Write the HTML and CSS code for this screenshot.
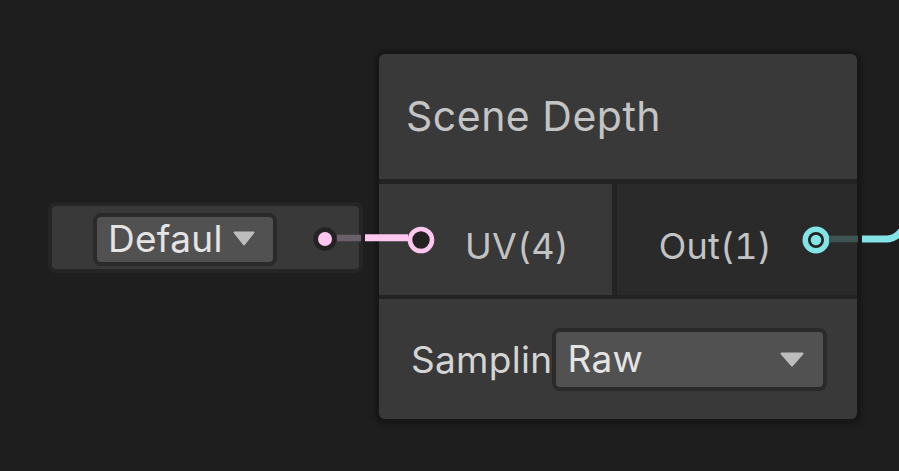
FILE: index.html
```html
<!DOCTYPE html>
<html lang="en">
<head>
<meta charset="utf-8">
<title>Scene Depth</title>
<link rel="stylesheet" href="styles.css">
</head>
<body>
<div class="canvas">
  <div class="field">
    <div class="dropdown dropdown--small">
      <span class="dropdown-text">Defaul</span>
      <svg class="arrow arrow--small" viewBox="0 0 22 15" width="22" height="15"><polygon points="1.5,1.5 20.5,1.5 11,13.5" fill="#bdbdbd" stroke="#bdbdbd" stroke-width="2" stroke-linejoin="round"/></svg>
    </div>
    <svg class="field-port" viewBox="0 0 24 24" width="24" height="24"><circle cx="12" cy="12" r="11.7" fill="#232323"/><circle cx="12" cy="12" r="7" fill="#fdc7ef"/></svg>
  </div>

  <div class="node">
    <div class="node-title">Scene Depth</div>
    <div class="node-ports">
      <div class="port-col port-col--in">
        <svg class="port" viewBox="0 0 28 28" width="28" height="28"><circle cx="14" cy="14" r="11" fill="#222222" stroke="#fdc7ef" stroke-width="4.6"/></svg>
        <span class="port-label">UV(4)</span>
      </div>
      <div class="port-col port-col--out">
        <span class="port-label">Out(1)</span>
        <svg class="port" viewBox="0 0 28 28" width="28" height="28"><circle cx="14" cy="14" r="13.5" fill="#84e3e6"/><circle cx="14" cy="14" r="8" fill="#222222"/><circle cx="14" cy="14" r="5.3" fill="#84e3e6"/></svg>
      </div>
    </div>
    <div class="node-settings">
      <span class="setting-label">Samplin</span>
      <div class="dropdown dropdown--wide">
        <span class="dropdown-text">Raw</span>
        <svg class="arrow" viewBox="0 0 24 15" width="24" height="15"><polygon points="1.5,1.5 22.5,1.5 12,13.5" fill="#bdbdbd" stroke="#bdbdbd" stroke-width="2" stroke-linejoin="round"/></svg>
      </div>
    </div>
  </div>

  <svg class="edges" viewBox="0 0 899 471" width="899" height="471">
    <line x1="337" y1="238" x2="361" y2="238" stroke="#6b5f69" stroke-width="6.5"/>
    <line x1="365" y1="237.8" x2="408" y2="237.8" stroke="#fdc7ef" stroke-width="7"/>
    <line x1="829" y1="239" x2="858" y2="239" stroke="#3e5453" stroke-width="6.6"/>
    <path d="M862 239 H887 Q896 239 903 229" fill="none" stroke="#84e3e6" stroke-width="7"/>
  </svg>
</div>
</body>
</html>
```
FILE: styles.css
```css
* { box-sizing: border-box; }

html, body {
  margin: 0;
  padding: 0;
  background: #1e1e1e;
}

body {
  font-family: Inter, "Noto Sans", "Liberation Sans", sans-serif;
  line-height: 1.21;
}

.canvas {
  position: relative;
  width: 899px;
  height: 471px;
  overflow: hidden;
  background: #1e1e1e;
}

/* inline input field on the left */
.field {
  position: absolute;
  left: 48px;
  top: 202px;
  width: 315px;
  height: 71px;
  border: 4px solid #252525;
  border-radius: 8px;
  background: #393939;
  display: flex;
  align-items: center;
  padding: 7px 0 3px 41px;
}

.field-port {
  flex: 0 0 auto;
  margin-left: 36px;
  margin-top: -2px;
}

/* dropdowns */
.dropdown {
  display: flex;
  align-items: center;
  background: #515151;
  border: 4px solid #2a2a2a;
  border-radius: 8px;
  color: #e4e4e4;
  font-size: 37px;
  letter-spacing: 0.3px;
}

.dropdown--small {
  flex: 0 0 184px;
  height: 53px;
  padding: 0 18px 0 11px;
  justify-content: space-between;
}

.dropdown--wide {
  flex: 0 0 275px;
  height: 63px;
  padding: 0 19px 0 11px;
  justify-content: space-between;
}

.dropdown-text {
  white-space: nowrap;
}

.arrow {
  flex: 0 0 auto;
}

.arrow--small {
  margin-top: -2px;
}

/* node */
.node {
  position: absolute;
  left: 376px;
  top: 51px;
  width: 484px;
  height: 371px;
  border: 3px solid #171717;
  border-radius: 9px;
  background: #232323;
  box-shadow: 0 2px 6px rgba(0, 0, 0, 0.35);
  display: flex;
  flex-direction: column;
  overflow: hidden;
}

.node-title {
  flex: 0 0 125px;
  background: #393939;
  color: #c4c4c4;
  font-size: 41px;
  letter-spacing: 0.5px;
  display: flex;
  align-items: center;
  padding-left: 27px;
  margin-bottom: 5px;
}

.node-ports {
  flex: 0 0 111px;
  display: flex;
  gap: 5px;
  margin-bottom: 4px;
}

.port-col {
  display: flex;
  align-items: center;
  gap: 30px;
}

.port-col--in {
  flex: 0 0 233px;
  background: #383838;
  padding-left: 28px;
}

.port-col--out {
  flex: 1 1 auto;
  background: #2a2a2a;
  justify-content: flex-end;
  padding-right: 27px;
}

.port {
  flex: 0 0 auto;
}

.port-label {
  color: #c3c3c3;
  font-size: 36px;
  font-feature-settings: "tnum" 1;
  letter-spacing: 0.2px;
  margin-top: 14px;
}

.node-settings {
  flex: 1 1 auto;
  background: #393939;
  display: flex;
  align-items: center;
  padding: 0 31px 0 32px;
}

.setting-label {
  flex: 0 0 140px;
  white-space: nowrap;
  color: #d4d4d4;
  font-size: 37px;
  letter-spacing: 0.3px;
  margin-top: 3px;
}

.edges {
  position: absolute;
  left: 0;
  top: 0;
  pointer-events: none;
}
```
